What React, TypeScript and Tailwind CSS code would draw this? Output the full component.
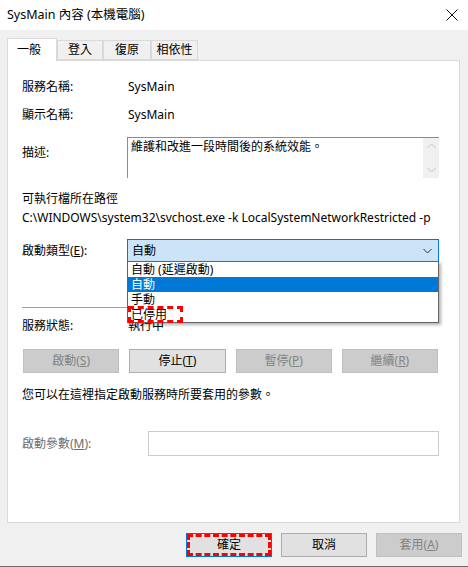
import { ReactNode } from "react";

const font = { fontFamily: '"Noto Sans", "Noto Sans CJK TC", sans-serif' };

function Btn({
  children,
  disabled,
  className = "",
}: {
  children: ReactNode;
  disabled?: boolean;
  className?: string;
}) {
  return (
    <div
      className={
        "h-[24px] flex items-center justify-center border text-[12px] " +
        (disabled
          ? "bg-[#cccccc] border-[#bfbfbf] text-[#838383] "
          : "bg-[#e1e1e1] border-[#adadad] text-black ") +
        className
      }
    >
      {children}
    </div>
  );
}

function Tab({ label, active }: { label: string; active?: boolean }) {
  return active ? (
    <div className="h-[23px] px-[9px] flex items-center bg-white border border-b-0 border-[#d9d9d9] relative z-10 -mb-px w-[50px]">
      {label}
    </div>
  ) : (
    <div className="h-[20px] flex items-center justify-center border border-l-0 border-[#d9d9d9] bg-[#f0f0f0] first:border-l">
      {label}
    </div>
  );
}

export default function App() {
  return (
    <div
      className="w-[468px] h-[567px] bg-[#f0f0f0] flex flex-col text-[12px] text-black border-b border-[#6b6b6b]"
      style={font}
    >
      {/* title bar */}
      <div className="h-[30px] bg-white flex items-center justify-between pl-[7px] pr-[9px] shrink-0">
        <span className="text-[12.5px]">SysMain 內容 (本機電腦)</span>
        <svg width="12" height="12" viewBox="0 0 12 12" className="mr-[1px]">
          <path d="M0.5 0.5 L11.5 11.5 M11.5 0.5 L0.5 11.5" stroke="#111" strokeWidth="1" />
        </svg>
      </div>

      <div className="px-[7px] pt-[8px] flex-1 flex flex-col">
        {/* tabs */}
        <div className="flex items-end h-[22px]">
          <Tab label="一般" active />
          <div className="flex">
            <div className="w-[46px]"><Tab label="登入" /></div>
            <div className="w-[48px]"><Tab label="復原" /></div>
            <div className="w-[47px]"><Tab label="相依性" /></div>
          </div>
        </div>

        {/* panel */}
        <div className="h-[463px] w-[453px] bg-white border border-[#d9d9d9] pl-[14px] pr-[20px] pt-[18px] relative">
          <div className="flex h-[16px] items-center">
            <span className="w-[106px]">服務名稱:</span>
            <span>SysMain</span>
          </div>
          <div className="flex h-[16px] items-center mt-[12px]">
            <span className="w-[106px]">顯示名稱:</span>
            <span>SysMain</span>
          </div>
          <div className="flex mt-[14px]">
            <span className="w-[105px] pt-[7px]">描述:</span>
            <div className="flex-1 h-[41px] border border-[#8c8c8c] border-r-0 border-b-0 flex">
              <div className="flex-1 px-[3px] pt-[1px] leading-[16px]">維護和改進一段時間後的系統效能。</div>
              <div className="w-[16px] bg-[#f0f0f0] flex flex-col items-center justify-between py-[5px]">
                <svg width="9" height="6" viewBox="0 0 9 6">
                  <path d="M0.5 5 L4.5 1 L8.5 5" stroke="#c2c2c2" fill="none" />
                </svg>
                <svg width="9" height="6" viewBox="0 0 9 6">
                  <path d="M0.5 1 L4.5 5 L8.5 1" stroke="#c2c2c2" fill="none" />
                </svg>
              </div>
            </div>
          </div>
          <div className="h-[16px] flex items-center mt-[13px]">可執行檔所在路徑</div>
          <div className="h-[16px] flex items-center mt-[3px] whitespace-nowrap">
            C:\WINDOWS\system32\svchost.exe -k LocalSystemNetworkRestricted -p
          </div>

          {/* startup type */}
          <div className="flex items-center mt-[13px] relative">
            <span className="w-[105px]">
              啟動類型(<span className="underline">E</span>):
            </span>
            <div className="flex-1 h-[23px] bg-[#cce4f7] border border-[#0078d7] flex items-center justify-between pl-[4px] pr-[6px]">
              <span>自動</span>
              <svg width="9" height="6" viewBox="0 0 9 6">
                <path d="M0.5 1 L4.5 5 L8.5 1" stroke="#333" fill="none" />
              </svg>
            </div>
            {/* dropdown list */}
            <div className="absolute left-[105px] right-0 top-[22px] bg-white border border-[#646464] z-20 shadow-[2px_2px_3px_rgba(0,0,0,0.3)] leading-[15px]">
              <div className="h-[15px] pl-[3px]">自動 (延遲啟動)</div>
              <div className="h-[15px] pl-[3px] bg-[#0078d7] text-white">自動</div>
              <div className="h-[15px] pl-[3px]">手動</div>
              <div className="h-[15px] pl-[3px] relative">
                已停用
                <div className="absolute left-0 top-[-1px] w-[55px] h-[17px] border-[3px] border-dashed border-[#ff0000]" />
              </div>
            </div>
          </div>

          <div className="h-px bg-[#a0a0a0] mt-[45px]" />

          <div className="flex h-[16px] items-center mt-[10px]">
            <span className="w-[106px]">服務狀態:</span>
            <span>執行中</span>
          </div>

          <div className="grid grid-cols-4 gap-x-[10px] mt-[15px] mr-[1px] ml-[1px]">
            <Btn disabled>
              啟動(<span className="underline">S</span>)
            </Btn>
            <Btn>
              停止(<span className="underline">T</span>)
            </Btn>
            <Btn disabled>
              暫停(<span className="underline">P</span>)
            </Btn>
            <Btn disabled>
              繼續(<span className="underline">R</span>)
            </Btn>
          </div>

          <div className="h-[16px] flex items-center mt-[14px]">您可以在這裡指定啟動服務時所要套用的參數。</div>

          <div className="flex items-center mt-[28px]">
            <span className="w-[126px] text-[#6d6d6d]">
              啟動參數(<span className="underline">M</span>):
            </span>
            <div className="flex-1 h-[25px] border border-[#cccccc] bg-white" />
          </div>
        </div>

        {/* bottom buttons */}
        <div className="flex justify-end gap-[9px] mt-[10px] -mr-[1px]">
          <div className="relative w-[86px] h-[24px] border border-[#0078d7] bg-[#e1e1e1] flex items-center justify-center">
            確定
            <div className="absolute inset-0 border-[3px] border-dashed border-[#ff0000]" />
          </div>
          <Btn className="w-[86px]">取消</Btn>
          <Btn disabled className="w-[86px]">
            套用(<span className="underline">A</span>)
          </Btn>
        </div>
      </div>
    </div>
  );
}
